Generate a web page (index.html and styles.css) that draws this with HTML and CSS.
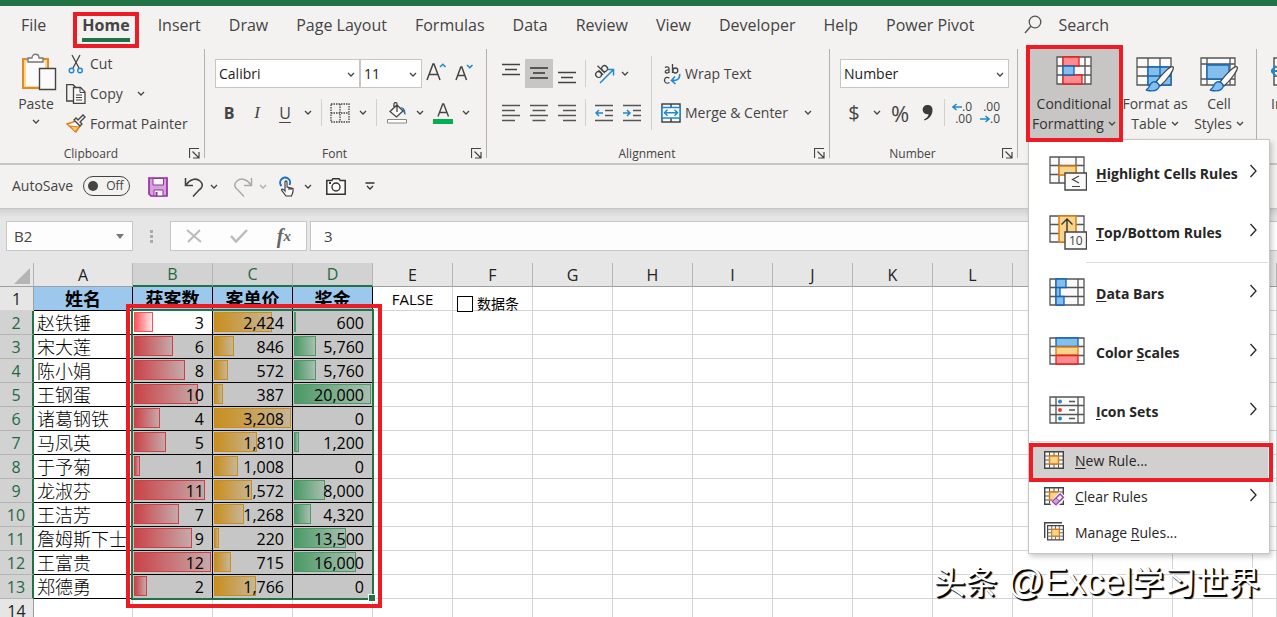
FILE: index.html
```html
<!DOCTYPE html>
<html lang="en">
<head>
<meta charset="utf-8">
<title>Excel</title>
<link rel="stylesheet" href="styles.css">
</head>
<body>
<svg class="defs" aria-hidden="true">
  <symbol id="chev" viewBox="0 0 8 6"><path d="M1 1l3 3 3-3" fill="none" stroke="currentColor" stroke-width="1.3"/></symbol>
  <symbol id="arrow" viewBox="0 0 9 14"><path d="M1.500 1l5.500 6-5.500 6" fill="none" stroke="currentColor" stroke-width="1.300"/></symbol>
  <symbol id="launch" viewBox="0 0 11 11"><path d="M.5 10V.5H10M3.500 3.500l6 6M10 4v6H4" fill="none" stroke="#444" stroke-width="1.200"/></symbol>
  <symbol id="grid" viewBox="0 0 36 28"><path d="M1 1h34v26H1zM1 9.500h34M1 18.500h34" fill="#fafafa" stroke="#555" stroke-width="1.300"/></symbol>
  <symbol id="minigrid" viewBox="0 0 20 18"><path d="M.7.7h18.600v16.600H.7z" fill="#fafafa" stroke="#444" stroke-width="1.400"/><path d="M.7 5h18.600M.7 13h18.600M5.500.7v16.600M14.500.7v16.600M10 .7V5M10 13v4M.7 9h5M14.500 9h5" stroke="#555"/><path d="M5.500 5h9v8h-9z" fill="#f8d58a" stroke="#e07b14" stroke-width="1.400"/></symbol>
</svg>

<div class="titlebar"></div>
<nav class="tabs">
  <button class="tab">File</button>
  <button class="tab tab-active">Home</button>
  <button class="tab">Insert</button>
  <button class="tab">Draw</button>
  <button class="tab">Page Layout</button>
  <button class="tab">Formulas</button>
  <button class="tab">Data</button>
  <button class="tab">Review</button>
  <button class="tab">View</button>
  <button class="tab">Developer</button>
  <button class="tab">Help</button>
  <button class="tab">Power Pivot</button>
  <button class="tab tab-search"><svg width="18" height="20" viewBox="0 0 18 20"><circle cx="11" cy="7" r="5.800" fill="none" stroke="#555" stroke-width="1.300"/><path d="M7 11L1 18" stroke="#555" stroke-width="1.400"/></svg>Search</button>
</nav>

<div class="ribbon">
  <section class="group group-clipboard">
    <div class="group-body">
      <button class="paste"><svg width="36" height="40" viewBox="0 0 36 40"><path d="M2 6h25v29H2z" fill="#fbd98f" stroke="#e08a2c" stroke-width="2"/><path d="M5 9h19v24H5z" fill="#fbfbfb"/><path d="M7 9V5h4c0-5 7-5 7 0h4v4z" fill="#fafafa" stroke="#777" stroke-width="1.300"/><path d="M18.500 15.500h16v21h-16z" fill="#fafafa" stroke="#444" stroke-width="1.400"/></svg><span>Paste</span><svg class="chev"><use href="#chev"/></svg></button>
      <div class="clip-list">
        <button class="cmd"><svg width="20" height="20" viewBox="0 0 20 20"><path d="M6 1l7 13M14 1L7 14" stroke="#444" stroke-width="1.300"/><circle cx="5.500" cy="16.500" r="2.300" fill="none" stroke="#1e88d2" stroke-width="1.400"/><circle cx="14" cy="16.500" r="2.300" fill="none" stroke="#1e88d2" stroke-width="1.400"/></svg>Cut</button>
        <button class="cmd"><svg width="20" height="20" viewBox="0 0 20 20"><path d="M7 17H.7V.7H7l3 3" fill="none" stroke="#444" stroke-width="1.300"/><path d="M7.500 3.500h7l4.500 4.500v11.300H7.500z" fill="#fafafa" stroke="#444" stroke-width="1.300"/><path d="M14 4v4.500h5M10 11h6M10 13.500h6M10 16h6" fill="none" stroke="#444"/></svg>Copy<svg class="chev chev-after"><use href="#chev"/></svg></button>
        <button class="cmd"><svg width="20" height="20" viewBox="0 0 20 20"><path d="M1 10l9-3 4 5-4 6z" fill="#fff" stroke="#e07b14" stroke-width="1.400"/><path d="M4 12l9 1-4 5z" fill="#f8c76d" stroke="#e07b14"/><path d="M8 6l2-2 2 2 5-5 2 2-5 5 2 2-2 2z" fill="#fafafa" stroke="#444" stroke-width="1.300"/></svg>Format Painter</button>
      </div>
    </div>
    <footer class="group-foot"><span>Clipboard</span><button class="launcher" aria-label="Clipboard settings"><svg><use href="#launch"/></svg></button></footer>
  </section>

  <section class="group group-font">
    <div class="group-body stack">
      <div class="tool-row">
        <div class="combo combo-font"><select aria-label="Font"><option>Calibri</option></select><svg class="chev"><use href="#chev"/></svg></div>
        <div class="combo combo-size"><select aria-label="Font size"><option>11</option></select><svg class="chev"><use href="#chev"/></svg></div>
        <button class="tool" aria-label="Increase font size"><svg width="22" height="24" viewBox="0 0 22 24"><path d="M1 18L7 2h1l6 16M3.500 12.500h8" fill="none" stroke="#444" stroke-width="1.500"/><path d="M14 5l2.800-2.800L19.500 5" fill="none" stroke="#1e88d2" stroke-width="1.500"/></svg></button>
        <button class="tool" aria-label="Decrease font size"><svg width="20" height="24" viewBox="0 0 20 24"><path d="M1 18L5.800 5h1L11.500 18M3 13.500h6.500" fill="none" stroke="#444" stroke-width="1.500"/><path d="M12 3l2.800 2.800L17.500 3" fill="none" stroke="#1e88d2" stroke-width="1.500"/></svg></button>
      </div>
      <div class="tool-row">
        <button class="tool bold">B</button>
        <button class="tool italic">I</button>
        <button class="tool underline">U</button>
        <button class="drop" aria-label="Underline options"><svg class="chev"><use href="#chev"/></svg></button>
        <i class="sep"></i>
        <button class="tool" aria-label="Borders"><svg width="20" height="20" viewBox="0 0 20 20"><path d="M1 1h18v18H1zM10 1v18M1 10h18" fill="none" stroke="#444" stroke-width="1.300" stroke-dasharray="1.500 1"/></svg></button>
        <button class="drop" aria-label="Border options"><svg class="chev"><use href="#chev"/></svg></button>
        <i class="sep"></i>
        <button class="tool tool-wide" aria-label="Fill color"><svg width="20" height="22" viewBox="0 0 20 22"><path d="M10 3l6 6-6.500 6L3 9.500zM10 10V2c0-2-3-2-3 0v3" fill="#fafafa" stroke="#444" stroke-width="1.300"/><path d="M13 5c4 0 6 3 5.500 8-2-1-2-4-3-6z" fill="#1e6fb8"/><path d="M.5 17.500h19v3.500H.5z" fill="#fff" stroke="#888"/></svg></button>
        <button class="drop drop-narrow" aria-label="Fill options"><svg class="chev"><use href="#chev"/></svg></button>
        <button class="tool tool-wide" aria-label="Font color"><svg width="20" height="22" viewBox="0 0 20 22"><path d="M5 14.500L9.700 2h1L15.500 14.500M6.500 10.500h7.500" fill="none" stroke="#444" stroke-width="1.400"/><path d="M0 17h20v5H0z" fill="#00b050"/></svg></button>
        <button class="drop drop-narrow" aria-label="Font color options"><svg class="chev"><use href="#chev"/></svg></button>
      </div>
    </div>
    <footer class="group-foot"><span>Font</span><button class="launcher" aria-label="Font settings"><svg><use href="#launch"/></svg></button></footer>
  </section>

  <section class="group group-align">
    <div class="group-body">
      <div class="stack">
        <div class="tool-row">
          <button class="tool" aria-label="Top align"><svg width="18" height="24" viewBox="0 0 18 24"><path d="M0 2.500h18M3 7.500h12M0 12.500h18" stroke="#444" stroke-width="1.400"/></svg></button>
          <button class="tool tool-on" aria-label="Middle align"><svg width="18" height="20" viewBox="0 0 18 20"><path d="M0 4h18M3 9h12M0 14h18" stroke="#333" stroke-width="1.400"/></svg></button>
          <button class="tool" aria-label="Bottom align"><svg width="18" height="20" viewBox="0 0 18 20"><path d="M0 8.500h18M3 13.500h12M0 18.500h18" stroke="#444" stroke-width="1.400"/></svg></button>
          <i class="sep"></i>
          <button class="tool" aria-label="Orientation"><svg width="22" height="22" viewBox="0 0 22 22"><g fill="none" stroke="#444" stroke-width="1.300" transform="rotate(-45 7 8)"><ellipse cx="3.500" cy="9.500" rx="2.800" ry="3"/><path d="M6.500 6.500v6.500M9 2.500V13"/><ellipse cx="12" cy="9.500" rx="2.800" ry="3"/></g><path d="M7 20L20 7M14.500 6.500H20.500V12.500" fill="none" stroke="#1e88d2" stroke-width="1.500"/></svg></button>
          <button class="drop drop-narrow" aria-label="Orientation options"><svg class="chev"><use href="#chev"/></svg></button>
        </div>
        <div class="tool-row">
          <button class="tool" aria-label="Align left"><svg width="18" height="18" viewBox="0 0 18 18"><path d="M0 1.500h18M0 6.500h13M0 11.500h18M0 16.500h13" stroke="#555" stroke-width="1.500"/></svg></button>
          <button class="tool" aria-label="Center"><svg width="18" height="18" viewBox="0 0 18 18"><path d="M0 1.500h18M2.500 6.500h13M0 11.500h18M2.500 16.500h13" stroke="#555" stroke-width="1.500"/></svg></button>
          <button class="tool" aria-label="Align right"><svg width="18" height="18" viewBox="0 0 18 18"><path d="M0 1.500h18M5 6.500h13M0 11.500h18M5 16.500h13" stroke="#555" stroke-width="1.500"/></svg></button>
          <i class="sep"></i>
          <button class="tool" aria-label="Decrease indent"><svg width="18" height="18" viewBox="0 0 18 18"><path d="M0 1.500h18M10 6.500h8M10 11.500h8M0 16.500h18" stroke="#555" stroke-width="1.500"/><path d="M8 9H1M4 6L1 9l3 3" fill="none" stroke="#1e88d2" stroke-width="1.500"/></svg></button>
          <button class="tool" aria-label="Increase indent"><svg width="18" height="18" viewBox="0 0 18 18"><path d="M0 1.500h18M10 6.500h8M10 11.500h8M0 16.500h18" stroke="#555" stroke-width="1.500"/><path d="M0 9h7M4 6l3 3-3 3" fill="none" stroke="#1e88d2" stroke-width="1.500"/></svg></button>
        </div>
      </div>
      <i class="sep sep-tall"></i>
      <div class="stack wrap-col">
        <button class="cmd"><svg width="20" height="22" viewBox="0 0 20 22"><g fill="none" stroke="#444" stroke-width="1.300"><path d="M4 4.500c1-1 4-1 4 1V10M8 7c-4-.5-5 3-2 3 1 0 2-.8 2-1.500M11.500 1v9"/><circle cx="14.300" cy="7.500" r="2.500"/><path d="M8.500 15c-4-2-6 1-4.500 4 1 1.500 3 1.500 4.500.5"/></g><path d="M18.500 11c1 5-3 7-8 6.500M14 13.500l-3.500 4 4 3.500" fill="none" stroke="#1e88d2" stroke-width="1.600"/></svg>Wrap Text</button>
        <button class="cmd"><svg width="20" height="20" viewBox="0 0 20 20"><path d="M1 1h18v18H1zM10 1v4M10 15v4" fill="#fafafa" stroke="#444" stroke-width="1.500"/><path d="M1 4.500h18v10.500H1z" fill="#fff" stroke="#1e88d2" stroke-width="1.500"/><path d="M3.500 9.800h13M6.500 6.800l-3 3 3 3M13.500 6.800l3 3-3 3" fill="none" stroke="#1e88d2" stroke-width="1.500"/></svg>Merge &amp; Center<svg class="chev chev-after"><use href="#chev"/></svg></button>
      </div>
    </div>
    <footer class="group-foot"><span>Alignment</span><button class="launcher" aria-label="Alignment settings"><svg><use href="#launch"/></svg></button></footer>
  </section>

  <section class="group group-number">
    <div class="group-body stack">
      <div class="tool-row">
        <div class="combo combo-number"><select aria-label="Number format"><option>Number</option></select><svg class="chev"><use href="#chev"/></svg></div>
      </div>
      <div class="tool-row">
        <button class="tool glyph">$</button>
        <button class="drop" aria-label="Currency options"><svg class="chev"><use href="#chev"/></svg></button>
        <button class="tool glyph glyph-percent">%</button>
        <button class="tool" aria-label="Comma style"><svg width="12" height="18" viewBox="0 0 12 18"><path d="M5.500 1a4.500 4.500 0 0 1 5 5c0 5-3 9-8 10.500l-.5-1C5 14 6.500 12 6.500 10A4.600 4.600 0 1 1 5.500 1z" fill="#3b3b3b"/></svg></button>
        <i class="sep sep-close"></i>
        <button class="tool decimals"><span class="line"><svg width="10" height="8" viewBox="0 0 10 8"><path d="M10 4H1M4.500 1L1 4l3.500 3" fill="none" stroke="#1e88d2" stroke-width="1.500"/></svg>.0</span><span class="line">.00</span></button>
        <button class="tool decimals"><span class="line">.00</span><span class="line"><svg width="10" height="8" viewBox="0 0 10 8"><path d="M0 4h9M5.500 1L9 4 5.500 7" fill="none" stroke="#1e88d2" stroke-width="1.500"/></svg>.0</span></button>
      </div>
    </div>
    <footer class="group-foot"><span>Number</span><button class="launcher" aria-label="Number settings"><svg><use href="#launch"/></svg></button></footer>
  </section>

  <section class="group group-styles">
    <div class="cond-wrap">
      <button class="big big-on"><svg width="36" height="29" viewBox="0 0 36 29"><path d="M1 1h34v27H1zM1 10h34M1 19h34M7 1v27M29 1v27" fill="#fafafa" stroke="#555" stroke-width="1.300"/><path d="M7 1h16v9H7zM7 19h19v9H7z" fill="#ff8a8f" stroke="#e3211c" stroke-width="1.300"/><path d="M7 10h11v9H7z" fill="#83beec" stroke="#0f64b4" stroke-width="1.300"/></svg><span>Conditional</span><span>Formatting <svg class="chev"><use href="#chev"/></svg></span></button>
      <div class="menu" role="menu">
        <button class="item item-large"><svg width="38" height="36" viewBox="0 0 38 36"><use href="#grid" width="36" height="28"/><path d="M10 1v26M27 1v26" stroke="#555" stroke-width="1.300"/><path d="M10 10h17v9H10z" fill="#f8d58a" stroke="#e07b14" stroke-width="1.500"/><path d="M16 17h21.500v17H16z" fill="#fafafa" stroke="#444" stroke-width="1.400"/><path d="M30 20l-6.500 3.500L30 27M23 30.500h8" fill="none" stroke="#444" stroke-width="1.200"/></svg><b><u>H</u>ighlight Cells Rules</b><svg class="arrow"><use href="#arrow"/></svg></button>
        <button class="item item-large"><svg width="38" height="36" viewBox="0 0 38 36"><use href="#grid" width="36" height="28"/><path d="M10 1h17v26H10z" fill="#f8d58a" stroke="#e07b14" stroke-width="1.500"/><path d="M18 18V4M12.500 9.500L18 4l5.500 5.500" fill="none" stroke="#333" stroke-width="1.400"/><path d="M16 17h21.500v17H16z" fill="#fafafa" stroke="#444" stroke-width="1.400"/><text x="20" y="30" class="icon-num">10</text></svg><b><u>T</u>op/Bottom Rules</b><svg class="arrow"><use href="#arrow"/></svg></button>
        <hr class="menu-line menu-line-inset">
        <button class="item item-large"><svg width="38" height="32" viewBox="0 0 38 32"><use href="#grid" width="36" height="28"/><path d="M7 1v26M29 1v26" stroke="#555" stroke-width="1.300"/><path d="M7 1h10v8.500H7zM7 9.500h4v9H7zM7 18.500h8V27H7z" fill="#83beec" stroke="#0f64b4" stroke-width="1.300"/></svg><b><u>D</u>ata Bars</b><svg class="arrow"><use href="#arrow"/></svg></button>
        <button class="item item-large"><svg width="38" height="32" viewBox="0 0 38 32"><use href="#grid" width="36" height="28"/><path d="M7 1h22v8.500H7z" fill="#83beec" stroke="#0f64b4" stroke-width="1.300"/><path d="M7 10h22v8H7z" fill="#f8d58a" stroke="#e07b14" stroke-width="1.300"/><path d="M7 18.500h22V27H7z" fill="#ff8a8f" stroke="#e3211c" stroke-width="1.300"/></svg><b>Color <u>S</u>cales</b><svg class="arrow"><use href="#arrow"/></svg></button>
        <button class="item item-large"><svg width="38" height="32" viewBox="0 0 38 32"><use href="#grid" width="36" height="28"/><path d="M7 1v26M29 1v26M20 5.500h6M20 14h6M20 22.500h6" stroke="#555" stroke-width="1.300"/><circle cx="11" cy="5.500" r="2" fill="#1e88d2"/><circle cx="11" cy="14" r="2" fill="#e83b36"/><circle cx="11" cy="22.500" r="2" fill="#1e88d2"/></svg><b><u>I</u>con Sets</b><svg class="arrow"><use href="#arrow"/></svg></button>
        <hr class="menu-line">
        <button class="item item-on"><svg width="20" height="20" viewBox="0 0 20 20"><use href="#minigrid" width="20" height="18"/></svg><span><u>N</u>ew Rule...</span></button>
        <button class="item"><svg width="20" height="20" viewBox="0 0 20 20"><use href="#minigrid" width="20" height="18"/><path d="M6 16L15 5l5 3v5l-7 7H8z" fill="#fff"/><path d="M8.500 14.500L16 7l3.300 3.300-7.300 7.400z" fill="#fff" stroke="#9b3fae" stroke-width="1.500"/><path d="M8.500 14.500l3.500-3.500 3.500 3-3.500 3.500z" fill="#d79be0" stroke="#9b3fae"/></svg><span><u>C</u>lear Rules</span><svg class="arrow"><use href="#arrow"/></svg></button>
        <button class="item"><svg width="20" height="22" viewBox="0 0 20 22"><path d="M.7 16V.7H18" fill="none" stroke="#444" stroke-width="1.400"/><use href="#minigrid" x="3" y="2.500" width="17" height="16.500"/></svg><span>Manage <u>R</u>ules...</span></button>
      </div>
    </div>
    <button class="big big-side"><svg width="38" height="36" viewBox="0 0 38 36"><path d="M1 1h34v27H1zM1 10h34M1 19h34M12 1v27M24 1v27" fill="#fafafa" stroke="#555" stroke-width="1.300"/><path d="M12 10h23v18H12zM24 10v18M12 19h23" fill="#83beec" stroke="#0f64b4" stroke-width="1.300"/><path d="M37 10c2 2-6 13-13 19l-4-4C27 16 35 8 37 10z" fill="#fafafa" stroke="#444" stroke-width="1.300"/><path d="M17 25c3-1 7 2 6 5-2 5-9 4-13 3 4-1 3-7 7-8z" fill="#83beec" stroke="#0f64b4" stroke-width="1.300"/></svg><span>Format as</span><span>Table <svg class="chev"><use href="#chev"/></svg></span></button>
    <button class="big big-side"><svg width="38" height="36" viewBox="0 0 38 36"><path d="M1 1h34v27H1zM1 7h34M1 22h34M7 1v27M30 1v27" fill="#fafafa" stroke="#555" stroke-width="1.300"/><path d="M7 8h22v14H7z" fill="#83beec" stroke="#0f64b4" stroke-width="1.300"/><path d="M37 10c2 2-6 13-13 19l-4-4C27 16 35 8 37 10z" fill="#fafafa" stroke="#444" stroke-width="1.300"/><path d="M17 25c3-1 7 2 6 5-2 5-9 4-13 3 4-1 3-7 7-8z" fill="#83beec" stroke="#0f64b4" stroke-width="1.300"/></svg><span>Cell</span><span>Styles <svg class="chev"><use href="#chev"/></svg></span></button>
  </section>

  <section class="group group-cells">
    <button class="big big-insert"><svg width="36" height="29" viewBox="0 0 36 29"><path d="M3 1h32v27H3zM3 10h32M3 19h32" fill="#fafafa" stroke="#555" stroke-width="1.500"/><path d="M0 14h12M5 9l-5 5 5 5" fill="none" stroke="#1e88d2" stroke-width="1.800"/></svg><span>Insert</span></button>
  </section>
</div>

<div class="quickbar">
  <label class="autosave"><span>AutoSave</span><span class="switch"><input type="checkbox">Off</span></label>
  <button class="quick q-save" aria-label="Save"><svg width="20" height="20" viewBox="0 0 20 20"><path d="M1 1h18v18H3l-2-2z" fill="#d9a0e0" stroke="#9230a0" stroke-width="1.700"/><path d="M5 1.500h10.500v6.500H5z" fill="#fafafa" stroke="#9230a0"/><path d="M6 13h9v6H6z" fill="#fafafa" stroke="#9230a0"/><path d="M7.500 15h2v4h-2z" fill="#9230a0"/></svg></button>
  <button class="quick q-undo" aria-label="Undo"><svg width="20" height="20" viewBox="0 0 20 20"><path d="M1.500 1v7.500H9M2 8C6 2 12 .5 16 4s2 7-1 9l-6 6.500" fill="none" stroke="#444" stroke-width="1.600"/></svg></button>
  <svg class="chev"><use href="#chev"/></svg>
  <button class="quick q-redo" aria-label="Redo" disabled><svg width="20" height="20" viewBox="0 0 20 20"><path d="M18.500 1v7.500H11M18 8C14 2 8 .5 4 4s-2 7 1 9l6 6.500" fill="none" stroke="#aaa" stroke-width="1.500"/></svg></button>
  <svg class="chev chev-dim"><use href="#chev"/></svg>
  <button class="quick q-touch" aria-label="Touch mode"><svg width="16" height="21" viewBox="0 0 16 21"><path d="M2.500 10a5 5 0 1 1 8-1" fill="none" stroke="#1e74c4" stroke-width="2"/><path d="M6 15V6c0-1.500 2-1.500 2 0v5l6 1.500V16l-1.500 4H7l-4.500-6c0-1.500 2-1 3.500 1zM10 11.500V14M12 12v2" fill="#fafafa" stroke="#333" stroke-width="1.100"/></svg></button>
  <svg class="chev"><use href="#chev"/></svg>
  <button class="quick q-camera" aria-label="Camera"><svg width="20" height="17" viewBox="0 0 20 17"><path d="M.8 2.500h5L7 .8h6l1.200 1.700h5v13.700H.8z" fill="#fafafa" stroke="#333" stroke-width="1.500"/><circle cx="10" cy="9" r="4" fill="none" stroke="#333" stroke-width="1.400"/><path d="M3 4h2v2H3z" fill="#333"/></svg></button>
  <button class="quick q-more" aria-label="Customize"><svg width="10" height="9" viewBox="0 0 10 9"><path d="M.5 1h9M2 4l3 3 3-3" fill="none" stroke="#333" stroke-width="1.300"/></svg></button>
</div>

<div class="formula">
  <div class="namebox"><input aria-label="Name box" value="B2"><svg width="8" height="5" viewBox="0 0 8 5"><path d="M0 0h8L4 5z" fill="#777"/></svg></div>
  <div class="dots"><i></i><i></i><i></i></div>
  <div class="fx">
    <button aria-label="Cancel"><svg width="16" height="14" viewBox="0 0 16 14"><path d="M1 1l14 12M14 1L2 13" stroke="#bbb" stroke-width="2"/></svg></button>
    <button aria-label="Enter"><svg width="18" height="14" viewBox="0 0 18 14"><path d="M1 7l5 5.500L17 1" fill="none" stroke="#bbb" stroke-width="2.500"/></svg></button>
    <button class="fx-btn">f<sub>x</sub></button>
  </div>
  <input class="formula-input" aria-label="Formula" value="3">
</div>

<main class="sheet">
  <table class="cells">
    <colgroup id="cols"></colgroup>
    <thead><tr id="head"></tr></thead>
    <tbody id="rows"></tbody>
  </table>
  <div class="selection"></div>
  <div class="callout"></div>
  <label class="sheet-check"><input type="checkbox">数据条</label>
  <div class="watermark">头条<span class="handle"> @Excel</span>学习世界</div>
</main>
<script src="script.js"></script>
</body>
</html>
```
FILE: styles.css
```css
* { box-sizing: border-box; }
body {
  margin: 0;
  height: 100vh;
  overflow: hidden;
  display: flex;
  flex-direction: column;
  background: #fff;
  color: #444;
  font: 14px/18px "Open Sans", "Noto Sans", "Noto Sans CJK SC", sans-serif;
}
button, input, select { font: inherit; color: inherit; border: 0; background: none; padding: 0; margin: 0; }
button { display: flex; align-items: center; white-space: nowrap; }
svg { display: block; flex: none; }
.defs { width: 0; height: 0; position: absolute; }
.chev { width: 8px; height: 6px; color: #444; }
.chev-dim { color: #aaa; }
.chev-after { margin-left: 8px; }

.titlebar { height: 6px; background: #217346; flex: none; }
.tabs {
  flex: none;
  display: flex;
  gap: 28px;
  height: 40px;
  padding-left: 21px;
  background: #f3f2f1;
  font-size: 16px;
}
.tab { height: 38px; }
.tab-active { position: relative; font-weight: 700; margin-left: 8px; }
.tab-active::before { content: ""; position: absolute; inset: 6px -9px -4px; border: 4px solid #ed1c24; }
.tab-active::after { content: ""; position: absolute; left: 0; right: 0; bottom: 2px; height: 4px; background: #217346; }
.tab-search { gap: 16px; margin-left: 22px; }

.ribbon {
  flex: none;
  display: flex;
  height: 119px;
  padding-top: 3px;
  background: #f3f2f1;
  border-bottom: 2px solid #c8c6c4;
}
.group {
  flex: none;
  display: flex;
  flex-direction: column;
  height: 109px;
  border-right: 1px solid #b3b0ad;
}
.group-body { display: flex; flex: 1; }
.stack { display: flex; flex-direction: column; gap: 10px; padding-top: 10px; }
.group-foot { position: relative; padding-right: 22px; text-align: center; font-size: 12px; line-height: 18px; height: 13px; }
.launcher { position: absolute; right: 4px; top: 3px; }
.launcher svg { width: 11px; height: 11px; }
.group-clipboard { width: 205px; }
.group-font { width: 282px; }
.group-align { width: 343px; }
.group-number { width: 188px; }
.group-styles { width: 239px; flex-direction: row; }
.group-cells { border: 0; }

.paste { flex-direction: column; justify-content: flex-start; width: 66px; padding: 4px 0 0 6px; gap: 2px; }
.paste > svg:first-child { margin-left: 6px; }
.paste .chev { margin-top: 4px; }
.cmd { height: 30px; gap: 4px; }
.clip-list .chev-after { margin-left: 10px; }

.tool-row { display: flex; align-items: center; height: 29px; }
.tool { width: 28px; height: 29px; justify-content: center; }
.tool-on { background: #c8c6c4; }
.tool-wide { width: 32px; }
.drop { width: 18px; height: 29px; justify-content: center; }
.drop-narrow { width: 14px; }
.sep { width: 1px; height: 27px; margin: 0 4px; background: #d2d0ce; }
.sep-close { margin: 0 2px; }
.sep-tall { height: 74px; margin: 7px 9px 0 5px; }
.combo { position: relative; height: 29px; background: #fff; border: 1px solid #c8c6c4; }
.combo select { appearance: none; width: 100%; height: 100%; padding-left: 3px; color: #222; outline: none; }
.combo .chev { position: absolute; right: 4px; top: 12px; }
.combo-font { width: 145px; }
.combo-size { width: 62px; margin-right: 1px; }
.combo-number { width: 169px; }
.group-font .stack, .group-align .group-body, .group-number .stack { padding-left: 10px; }
.bold { font-weight: 700; font-size: 16px; }
.italic { font: italic 17px "Liberation Serif", serif; }
.underline { text-decoration: underline; text-underline-offset: 3px; font-size: 16px; }
.wrap-col .cmd { height: 29px; }
.wrap-col .chev-after { margin-left: 12px; }
.glyph { font-size: 20px; }
.glyph-percent { font-size: 22px; }
.decimals { flex-direction: column; align-items: flex-end; width: 28px; font-size: 12px; line-height: 12px; padding-right: 3px; }
.decimals .line { display: flex; align-items: center; height: 12px; }

.cond-wrap { position: relative; margin: -4px 0 0 8px; height: 97px; }
.big { flex-direction: column; align-items: center; line-height: 20px; }
.big span { display: flex; align-items: center; gap: 4px; height: 20px; }
.big-on { position: relative; z-index: 3; width: 97px; height: 97px; border: 4px solid #ed1c24; background: #c8c6c4; color: #333; padding: 7px 1px 0 0; }
.big-on > svg { margin-bottom: 9px; }
.big-side { width: 64px; height: 90px; padding-top: 8px; }
.big-side > svg { margin-bottom: 1px; }
.big-insert { padding: 8px 0 0 14px; align-items: flex-start; }
.big-insert > svg { margin-bottom: 8px; }

.menu {
  position: absolute;
  z-index: 2;
  top: 94px;
  left: 2px;
  width: 242px;
  padding: 4px 1px 2px;
  background: #fff;
  border: 1px solid #c8c6c4;
  box-shadow: 2px 3px 5px rgba(0, 0, 0, .2);
  color: #262626;
}
.item { width: 100%; height: 36px; padding: 0 10px 0 14px; gap: 11px; }
.item-large { height: 59px; padding-left: 19px; gap: 9px; }
.item u { text-underline-offset: 2px; }
.item b { font-weight: 700; }
.arrow { width: 9px; height: 14px; margin: 0 0 5px auto; }
.item-on { position: relative; background: #d2d0ce; }
.item-on::after { content: ""; position: absolute; inset: 0 -5px -3px -1px; border: 4px solid #ed1c24; }
.menu-line { height: 1px; margin: 0 0 1px; border: 0; background: #dcdcdc; }
.menu-line-inset { margin-left: 56px; }
.icon-num { font: 12px "Open Sans", sans-serif; fill: #444; }

.quickbar { flex: none; display: flex; align-items: center; height: 44px; padding-left: 12px; background: #f3f2f1; border-bottom: 1px solid #c8c6c4; }
.autosave { display: flex; align-items: center; gap: 10px; padding-bottom: 2px; }
.switch { display: flex; align-items: center; gap: 8px; width: 47px; height: 20px; padding-left: 4px; border: 1px solid #444; border-radius: 10px; font-size: 12px; }
.switch input { appearance: none; width: 10px; height: 10px; border-radius: 5px; background: #444; }
.q-save { margin-left: 18px; }
.q-undo { margin: 0 6px 0 16px; }
.q-redo { margin: 0 6px 0 15px; }
.q-touch { margin: 0 9px 0 12px; }
.q-camera { margin-left: 14px; }
.q-more { margin-left: 19px; }

.formula { flex: none; display: flex; height: 54px; padding: 12px 0 12px 6px; background: linear-gradient(#d2d2d2, #e6e6e6 8px); }
.namebox, .fx, .formula-input { height: 30px; background: #fdfdfd; border: 1px solid #c6c6c6; }
.namebox { display: flex; align-items: center; width: 127px; padding: 0 8px 0 7px; }
.namebox input { flex: 1; min-width: 0; }
.dots { display: flex; flex-direction: column; justify-content: center; gap: 2px; width: 37px; align-items: center; }
.dots i { width: 3px; height: 3px; background: #aaa; }
.fx { display: flex; justify-content: space-between; width: 137px; padding: 0 15px; margin-right: 3px; }
.fx-btn { font: italic 700 20px/20px "Liberation Serif", serif; color: #666; }
.fx-btn sub { font-size: 15px; }
.namebox input, .formula-input { font-size: 15px; }
.formula-input { flex: 1; padding-left: 13px; border-right: 0; }

.sheet { position: relative; flex: 1; overflow: hidden; }
.cells { table-layout: fixed; width: 100%; border-spacing: 0; color: #000; font-size: 16px; line-height: 22px; }
.col-index { width: 34px; }
.col-name { width: 99px; }
.col-data { width: 80px; }
.cells th, .cells td { height: 24px; padding: 0; border-right: 1px solid #d4d4d4; border-bottom: 1px solid #d4d4d4; white-space: nowrap; overflow: hidden; }
.cells th { background: #e6e6e6; font-weight: 400; color: #222; }
.cells thead th { border-color: #b4b4b4; border-bottom-color: #9f9f9f; }
.cells tbody th { border-right-color: #9f9f9f; }
.cells th.picked { background: #d2d2d2; color: #1e6a41; }
.cells thead th.picked { border-bottom: 2px solid #217346; }
.cells tbody th.picked { border-right: 2px solid #217346; border-bottom-color: #b4b4b4; }
.cells .corner { padding: 4px 3px 2px; }
.corner svg { margin-left: auto; }
.cells .title { background: #9bc8ec; border-color: #000; font-weight: 700; font-size: 18px; text-align: center; }
.cells .name { border-color: #000; font-size: 18px; font-weight: 300; padding-left: 3px; }
.cells .value { position: relative; border-color: #000; background: #c6c6c6; text-align: right; padding-right: 8px; }
.cells .value.current { background: #fff; }
.cells .note { text-align: center; font-size: 15px; }
.track { position: absolute; inset: 1px 1px 2px; }
.bar { height: 100%; border: 1px solid; }
.bar-red { border-color: #cc4147; background: linear-gradient(90deg, #c94449, #c6a9a9); }
.bar-gold { border-color: #c98d1d; background: linear-gradient(90deg, #c98e1e, #c6b697); }
.bar-green { border-color: #4b9a66; background: linear-gradient(90deg, #4b9a66, #a9beb0); }
.current .bar { border-color: #f65058; background: linear-gradient(90deg, #ff555a, #ffe9e9); }
.figure { position: relative; }

.selection { position: absolute; left: 131px; top: 46px; width: 243px; height: 291px; border: 2px solid #217346; }
.selection::after { content: ""; position: absolute; right: -3px; bottom: -3px; width: 6px; height: 6px; background: #217346; outline: 1px solid #fff; }
.callout { position: absolute; left: 126px; top: 41px; width: 256px; height: 304px; border: 4px solid #ed1c24; }
.sheet-check { position: absolute; left: 457px; top: 32px; display: flex; align-items: center; gap: 4px; color: #000; font-size: 14px; }
.sheet-check input { appearance: none; width: 16px; height: 16px; border: 1px solid #000; background: #fff; }
.watermark { position: absolute; right: 17px; bottom: 12px; color: #fff; font: 32px/44px "Liberation Sans", "Noto Sans CJK SC", sans-serif; text-shadow: 2px 2px 1px #000, 1px 1px 0 #000; white-space: pre; }
.handle { font-size: 36px; }
```
FILE: script.js
```js
const people = [
  ["赵铁锤", 3, 2424, 600],
  ["宋大莲", 6, 846, 5760],
  ["陈小娟", 8, 572, 5760],
  ["王钢蛋", 10, 387, 20000],
  ["诸葛钢铁", 4, 3208, 0],
  ["马凤英", 5, 1810, 1200],
  ["于予菊", 1, 1008, 0],
  ["龙淑芬", 11, 1572, 8000],
  ["王洁芳", 7, 1268, 4320],
  ["詹姆斯下士", 9, 220, 13500],
  ["王富贵", 12, 715, 16000],
  ["郑德勇", 2, 1766, 0]
];
const peaks = [12, 3208, 20000];
const tints = ["red", "gold", "green"];
const letters = "ABCDEFGHIJKL".split("").concat(["", "", "", ""]);

document.getElementById("cols").innerHTML =
  '<col class="col-index"><col class="col-name">' +
  '<col class="col-data">'.repeat(letters.length - 2) + "<col>";

document.getElementById("head").innerHTML =
  '<th class="corner"><svg width="16" height="16" viewBox="0 0 16 16"><path d="M16 0v16H0z" fill="#b4b4b4"/></svg></th>' +
  letters.map(l => `<th class="${l && "BCD".includes(l) ? "picked" : ""}">${l}</th>`).join("");

const blanks = n => "<td></td>".repeat(n);

function valueCell(value, column, row) {
  const width = value / peaks[column] * 100;
  const bar = value ? `<div class="bar bar-${tints[column]}" style="width:${width}%"></div>` : "";
  const current = row === 0 && column === 0 ? " current" : "";
  return `<td class="value${current}"><div class="track">${bar}</div><span class="figure">${value.toLocaleString("en-US")}</span></td>`;
}

const titles = ["姓名", "获客数", "客单价", "奖金"];
let html = "<tr><th>1</th>" + titles.map(t => `<td class="title">${t}</td>`).join("") +
  '<td class="note">FALSE</td>' + blanks(11) + "</tr>";
people.forEach(([name, ...values], row) => {
  html += `<tr><th class="picked">${row + 2}</th><td class="name">${name}</td>` +
    values.map((v, c) => valueCell(v, c, row)).join("") + blanks(12) + "</tr>";
});
html += "<tr><th>14</th>" + blanks(16) + "</tr>";
document.getElementById("rows").innerHTML = html;
```
